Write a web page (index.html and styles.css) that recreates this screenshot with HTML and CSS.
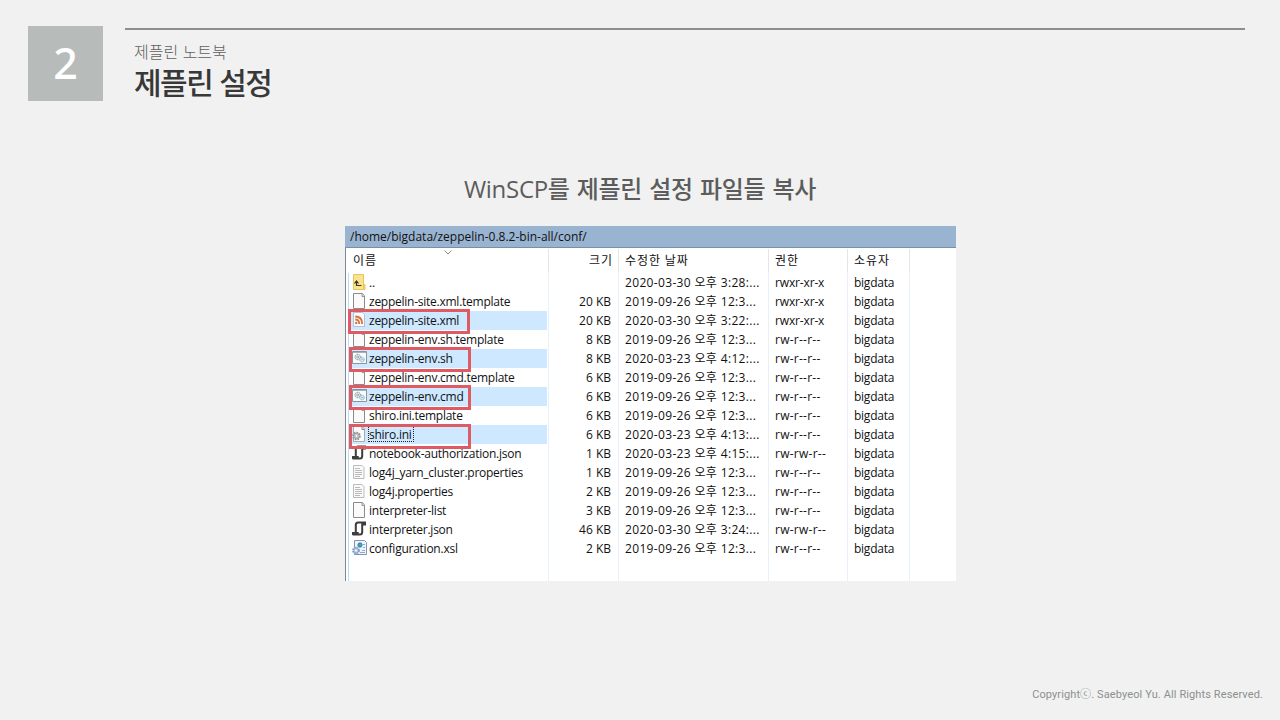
FILE: index.html
```html
<!DOCTYPE html>
<html lang="ko">
<head>
<meta charset="utf-8">
<title>제플린 설정</title>
<link rel="stylesheet" href="styles.css">
</head>
<body>
<svg class="defs" width="0" height="0">
  <symbol id="doc" viewBox="0 0 16 16"><path d="M1.5.5h9l2 2.500v12.500h-11z" fill="#fafafa" stroke="#8b8b8b"/><path d="M10 .5v3h2.500" fill="#ddd" stroke="#999"/></symbol>
  <symbol id="up" viewBox="0 0 16 16"><path d="M1.500.5h10v10h1.500v5h-11.500z" fill="#fbe28c" stroke="#e6c659"/><path d="M11.500 10.500v5" stroke="#e6c659"/><path d="M4.500 7.500v4h5M2.500 9.500l2-2.500 2 2.500" fill="none" stroke="#3b3426" stroke-width="1.200"/></symbol>
  <symbol id="xml" viewBox="0 0 16 16"><path d="M1.500.5h9l2 2v12h-11z" fill="#fafcff" stroke="#b9c0c7"/><g fill="none" stroke="#d8743c" stroke-width="1.800"><path d="M3.200 4.500q7 0 7 7.500M3.200 7.500q4 0 4 4.500"/></g><circle cx="4.200" cy="11" r="1.200" fill="#d8743c"/></symbol>
  <symbol id="cmd" viewBox="0 0 16 16"><path d="M.5 1.500h14v12h-14z" fill="#f8fafb" stroke="#8d9499"/><path d="M1 2.500h13" stroke="#aab0b5"/><circle cx="5.700" cy="7" r="2.700" fill="#eee" stroke="#828789" stroke-dasharray="1.300 .6"/><circle cx="5.700" cy="7" r="1" fill="none" stroke="#888" stroke-width=".7"/><circle cx="10" cy="9.500" r="2.300" fill="#d7edf9" stroke="#74aecd" stroke-dasharray="1.200 .5"/><circle cx="10" cy="9.500" r=".7" fill="#6da8c8"/></symbol>
  <symbol id="ini" viewBox="0 0 16 16"><path d="M1.500.5h9l2 2.500v12.500h-11z" fill="#fafafa" stroke="#aaa"/><path d="M10 .5v3h2.500" fill="none" stroke="#888"/><circle cx="4.500" cy="10" r="3.300" fill="#ccc" stroke="#929292" stroke-width="2" stroke-dasharray="1.700 .8"/><circle cx="4.500" cy="10" r="1.400" fill="#fff" stroke="#999" stroke-width=".6"/></symbol>
  <symbol id="json" viewBox="0 0 16 16"><path d="M3.800 11V4Q3.800 1.500 6 1.500h7v2h-2.300M10.200 2v9q0 2.500-2.200 2.500H1.500q-1-.2-1-1.500h6.200" fill="none" stroke="#3d3d3d" stroke-width="2"/></symbol>
  <symbol id="txt" viewBox="0 0 16 16"><path d="M1.500 1.500h8.500l2 2v11h-10.500z" fill="#fafafa" stroke="#bbb"/><path d="M3 4.500h5M3 6.500h7M3 8.500h7M3 10.500h7M3 12.500h5" stroke="#aaa" stroke-width=".8"/></symbol>
  <symbol id="xsl" viewBox="0 0 16 16"><path d="M2.500.5h10l2 2v12h-12z" fill="#eff5ff" stroke="#8495b4"/><path d="M11 4.500h2M11 7.500h2M8 12.500h5M10 10.500h3" stroke="#92a5ca"/><circle cx="8" cy="5" r="2.200" fill="#399cc1" stroke="#335eaf" stroke-width=".7"/><path d="M7 5q2-2 2 1" stroke="#55b967" fill="none"/><circle cx="4" cy="10.500" r="2.900" fill="#b3cde5" stroke="#7fa1c3" stroke-width="2" stroke-dasharray="1.600 .7"/><circle cx="4" cy="10.500" r="1" fill="#fff"/></symbol>
</svg>
<main class="slide">
  <header class="top">
    <div class="number">2</div>
    <div class="titles">
      <p class="chapter">제플린 노트북</p>
      <h1>제플린 설정</h1>
    </div>
  </header>
  <h2>WinSCP를 제플린 설정 파일들 복사</h2>
  <section class="panel">
    <div class="path">/home/bigdata/zeppelin-0.8.2-bin-all/conf/</div>
    <div class="listing">
      <div class="head cols"><div>이름<svg class="sort" width="8" height="5"><path d="M.5.5l3.500 3.500 3.500-3.500" fill="none" stroke="#8a8a8a"/></svg></div><div class="size">크기</div><div>수정한 날짜</div><div>권한</div><div>소유자</div><div></div></div>
      <div class="rows" id="rows"></div>
      <div class="fill cols"><div></div><div></div><div></div><div></div><div></div><div></div></div>
    </div>
    <i class="mark m1"></i><i class="mark m2"></i><i class="mark m3"></i><i class="mark m4"></i>
  </section>
  <footer><span>Copyrightⓒ. Saebyeol Yu. All Rights Reserved.</span></footer>
</main>
<script src="files.js"></script>
</body>
</html>
```
FILE: styles.css
```css
* { box-sizing: border-box; }
body { margin: 0; background: #f1f1f1; font-family: "Open Sans", "Noto Sans CJK KR", sans-serif; }
.defs { position: absolute; }
.slide { width: 1280px; height: 720px; display: flex; flex-direction: column; overflow: hidden; }
.top { display: flex; gap: 22px; padding: 26px 35px 0 28px; height: 150px; }
.number { width: 75px; height: 75px; background: #b7bcba; color: #fff; font: 500 43px/73px "Noto Sans", sans-serif; text-align: center; }
.titles { flex: 1; margin-top: 2px; border-top: 2px solid #8b908d; padding: 9px 0 0 9px; }
.chapter { margin: 0; font: 300 16px/24px "Noto Sans CJK KR", sans-serif; color: #606060; }
h1 { margin: 0; padding-top: 2px; font: 500 30px/38px "Liberation Sans", "Noto Sans CJK KR", sans-serif; color: #383838; letter-spacing: -1.500px; }
h2 { margin: 0; height: 76px; padding-top: 21px; font: 500 24px/36px "Open Sans", "Noto Sans CJK KR", sans-serif; color: #5c5c5c; text-align: center; letter-spacing: -.3px; word-spacing: 1.200px; }
.panel { position: relative; width: 611px; height: 355px; margin-left: 345px; background: #fff; font-size: 12px; color: #111; display: flex; flex-direction: column; }
.path { height: 22px; background: #99b4d1; border-bottom: 1px solid #788fa8; padding-left: 5px; line-height: 21px; }
.listing { flex: 1; border-left: 1px solid #7f8790; display: flex; flex-direction: column; }
.cols { display: grid; grid-template-columns: 203px 70px 150px 79px 62px 1fr; }
.cols > div { border-right: 1px solid #e8f1fb; padding-left: 6px; white-space: nowrap; overflow: hidden; }
.cols > div:last-child { border: 0; }
.head { height: 25px; line-height: 24px; letter-spacing: .9px; }
.head > div { border-color: #e5e5e5; margin-top: 1px; }
.head > div:first-child { padding-left: 7px; position: relative; }
.sort { position: absolute; left: 98px; top: 1px; }
.cols > .size { padding: 0 7px 0 0; text-align: right; }
.head > .size { padding-right: 5px; }
.row { height: 19px; line-height: 19px; }
.row > .name, .fill > div:first-child { margin-left: 2px; border-left: 1px solid #b9dcf8; }
.row > .name { display: flex; padding-left: 3px; letter-spacing: -.25px; }
.date { letter-spacing: .34px; }
.rights { letter-spacing: .25px; }
.row:nth-child(-n+3) > .rights { letter-spacing: -.15px; }
.owner { letter-spacing: -.25px; }
.icon { width: 16px; height: 16px; margin: 1px 1px 0 0; flex: none; }
.selected > .name { background: linear-gradient(#cde8ff, #cde8ff) 0 0 / 198px 100% no-repeat; }
.focus { outline: 1px dotted #222; outline-offset: 0; height: 15px; line-height: 17px; margin-top: 1px; padding-right: 1px; }
.fill { flex: 1; }
.mark { position: absolute; width: 122px; height: 25px; left: 4px; border: 3px solid #df5b63; }
.m1 { left: 3px; top: 83px; }
.m2 { top: 121px; }
.m3 { top: 159px; }
.m4 { top: 198px; }
footer { margin-top: auto; height: 37px; padding-right: 17px; text-align: right; font: 11px/24px Roboto, "Noto Sans CJK KR", sans-serif; color: #8b908d; letter-spacing: .11px; }
```
FILE: files.js
```js
const files = [
  ['up', '..', '', '2020-03-30 오후 3:28:...', 'rwxr-xr-x'],
  ['doc', 'zeppelin-site.xml.template', '20 KB', '2019-09-26 오후 12:3...', 'rwxr-xr-x'],
  ['xml', 'zeppelin-site.xml', '20 KB', '2020-03-30 오후 3:22:...', 'rwxr-xr-x', 'selected'],
  ['doc', 'zeppelin-env.sh.template', '8 KB', '2019-09-26 오후 12:3...', 'rw-r--r--'],
  ['cmd', 'zeppelin-env.sh', '8 KB', '2020-03-23 오후 4:12:...', 'rw-r--r--', 'selected'],
  ['doc', 'zeppelin-env.cmd.template', '6 KB', '2019-09-26 오후 12:3...', 'rw-r--r--'],
  ['cmd', 'zeppelin-env.cmd', '6 KB', '2019-09-26 오후 12:3...', 'rw-r--r--', 'selected'],
  ['doc', 'shiro.ini.template', '6 KB', '2019-09-26 오후 12:3...', 'rw-r--r--'],
  ['ini', 'shiro.ini', '6 KB', '2020-03-23 오후 4:13:...', 'rw-r--r--', 'selected', 'focus'],
  ['json', 'notebook-authorization.json', '1 KB', '2020-03-23 오후 4:15:...', 'rw-rw-r--'],
  ['txt', 'log4j_yarn_cluster.properties', '1 KB', '2019-09-26 오후 12:3...', 'rw-r--r--'],
  ['txt', 'log4j.properties', '2 KB', '2019-09-26 오후 12:3...', 'rw-r--r--'],
  ['doc', 'interpreter-list', '3 KB', '2019-09-26 오후 12:3...', 'rw-r--r--'],
  ['json', 'interpreter.json', '46 KB', '2020-03-30 오후 3:24:...', 'rw-rw-r--'],
  ['xsl', 'configuration.xsl', '2 KB', '2019-09-26 오후 12:3...', 'rw-r--r--']
];
document.getElementById('rows').innerHTML = files.map(([icon, name, size, date, rights, state = '', focus = '']) =>
  `<div class="row cols ${state}"><div class="name"><svg class="icon"><use href="#${icon}"/></svg><span class="${focus}">${name}</span></div><div class="size">${size}</div><div class="date">${date}</div><div class="rights">${rights}</div><div class="owner">bigdata</div><div></div></div>`
).join('');
```
